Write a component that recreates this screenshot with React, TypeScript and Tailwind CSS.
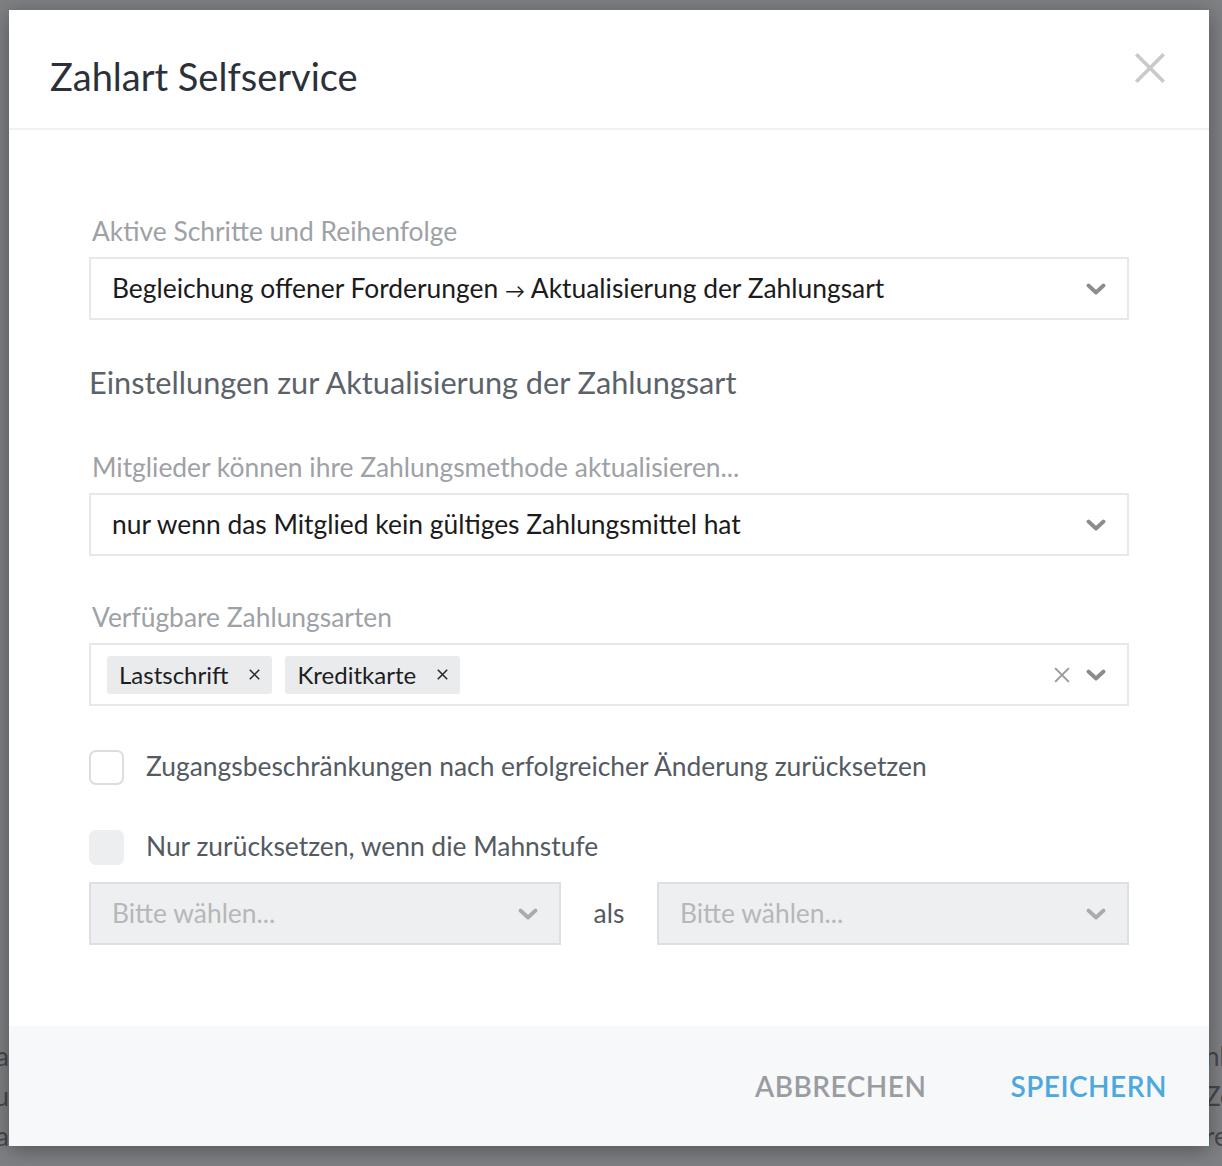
import { ReactNode } from "react";

function Chevron({ className = "" }: { className?: string }) {
  return (
    <svg width="20" height="12" viewBox="0 0 20 12" className={className} aria-hidden="true">
      <path d="M2.5 2.5 L10 9.5 L17.5 2.5" fill="none" stroke="currentColor" strokeWidth="3.8" strokeLinecap="round" strokeLinejoin="round" />
    </svg>
  );
}

function Cross({ size = 14, width = 2, className = "" }: { size?: number; width?: number; className?: string }) {
  return (
    <svg width={size} height={size} viewBox="0 0 14 14" className={className} aria-hidden="true">
      <path d="M1 1 L13 13 M13 1 L1 13" fill="none" stroke="currentColor" strokeWidth={width} />
    </svg>
  );
}

function Label({ children, className = "" }: { children: ReactNode; className?: string }) {
  return <div className={`pl-[3px] text-[26.4px] leading-[30px] text-[#9ea1a6] ${className}`}>{children}</div>;
}

function Select({ children, disabled = false }: { children: ReactNode; disabled?: boolean }) {
  return (
    <div
      className={`flex h-[63px] items-center border-2 pl-[21px] pr-[21px] ${
        disabled ? "border-[#dedfe2] bg-[#eeeff1]" : "border-[#e8e8e8] bg-white"
      }`}
    >
      <div className="flex min-w-0 flex-1 items-center">{children}</div>
      <Chevron className={disabled ? "text-[#a9abae]" : "text-[#8b8c8f]"} />
    </div>
  );
}

function Tag({ label }: { label: string }) {
  return (
    <span className="flex h-[38px] items-center gap-[21px] rounded-[3px] bg-[#eaebed] pl-[12px] pr-[12px] text-[24px] text-[#1d1d1f]">
      {label}
      <Cross size={11} width={2} className="text-[#2a2a2a]" />
    </span>
  );
}

export default function App() {
  return (
    <div
      className="relative min-h-[1166px] w-full overflow-hidden bg-[#7f8084] pl-[9px] pr-[13px] pt-[10px]"
      style={{ fontFamily: "Lato, 'Liberation Sans', sans-serif" }}
    >
      {/* page behind the overlay, only its edges show */}
      <div className="pointer-events-none absolute inset-0 text-[26px] leading-[40px] text-[#45474c]">
        <div className="absolute right-[1213px] top-[1036px] whitespace-nowrap text-right">
          <div>Zahla</div>
          <div>Zu</div>
          <div>Fa</div>
        </div>
        <div className="absolute left-[1205px] top-[1036px] whitespace-nowrap">
          <div>nlung</div>
          <div>Zeit</div>
          <div>re</div>
        </div>
      </div>

      <div className="relative flex h-[1136px] w-[1200px] flex-col bg-white shadow-[0_4px_20px_rgba(0,0,0,0.35)]">
        <header className="flex h-[120px] shrink-0 items-center justify-between border-b-2 border-[#f1f1f2] pl-[41px] pr-[43px]">
          <h1 className="pt-[14px] text-[38px] font-normal text-[#2c3139]">Zahlart Selfservice</h1>
          <button type="button" className="-mt-[2px] text-[#c9c9c9]" aria-label="Schließen">
            <Cross size={32} width={1.6} />
          </button>
        </header>

        <main className="flex flex-1 flex-col px-[80px]">
          <Label className="mt-[86px]">Aktive Schritte und Reihenfolge</Label>
          <div className="mt-[11px]">
            <Select>
              <span className="text-[26.4px] text-[#1b1b1b]">
                Begleichung offener Forderungen <span className="text-[20px]">→</span> Aktualisierung der Zahlungsart
              </span>
            </Select>
          </div>

          <h2 className="mt-[45px] text-[30.7px] leading-[36px] text-[#5b626a]">Einstellungen zur Aktualisierung der Zahlungsart</h2>

          <Label className="mt-[51px]">Mitglieder können ihre Zahlungsmethode aktualisieren...</Label>
          <div className="mt-[11px]">
            <Select>
              <span className="text-[26.4px] text-[#1b1b1b]">nur wenn das Mitglied kein gültiges Zahlungsmittel hat</span>
            </Select>
          </div>

          <Label className="mt-[46px]">Verfügbare Zahlungsarten</Label>
          <div className="mt-[11px]">
            <div className="flex h-[63px] items-center border-2 border-[#e8e8e8] bg-white pl-[16px] pr-[21px]">
              <div className="flex flex-1 items-center gap-[13px]">
                <Tag label="Lastschrift" />
                <Tag label="Kreditkarte" />
              </div>
              <Cross size={16} width={1.8} className="mr-[16px] text-[#9a9b9e]" />
              <Chevron className="text-[#8b8c8f]" />
            </div>
          </div>

          <label className="mt-[43px] flex h-[36px] items-center gap-[22px]">
            <span className="h-[35px] w-[35px] rounded-[7px] border-2 border-[#dcdddf] bg-white" />
            <span className="text-[26.4px] text-[#545a62]">Zugangsbeschränkungen nach erfolgreicher Änderung zurücksetzen</span>
          </label>

          <label className="mt-[44px] flex h-[36px] items-center gap-[22px]">
            <span className="h-[35px] w-[35px] rounded-[7px] bg-[#eceef0]" />
            <span className="text-[26.4px] text-[#545a62]">Nur zurücksetzen, wenn die Mahnstufe</span>
          </label>

          <div className="mt-[17px] flex items-center">
            <div className="w-[472px]">
              <Select disabled>
                <span className="text-[26.4px] text-[#b6b7ba]">Bitte wählen...</span>
              </Select>
            </div>
            <span className="flex-1 text-center text-[26.4px] text-[#545a62]">als</span>
            <div className="w-[472px]">
              <Select disabled>
                <span className="text-[26.4px] text-[#b6b7ba]">Bitte wählen...</span>
              </Select>
            </div>
          </div>
        </main>

        <footer className="flex h-[120px] shrink-0 items-center justify-end gap-[84px] bg-[#f7f8fa] pr-[42px]">
          <button type="button" className="text-[28px] font-semibold tracking-[0.5px] text-[#9b9ca1]">
            ABBRECHEN
          </button>
          <button type="button" className="text-[28px] font-semibold tracking-[0.5px] text-[#4ca8dd]">
            SPEICHERN
          </button>
        </footer>
      </div>
    </div>
  );
}
